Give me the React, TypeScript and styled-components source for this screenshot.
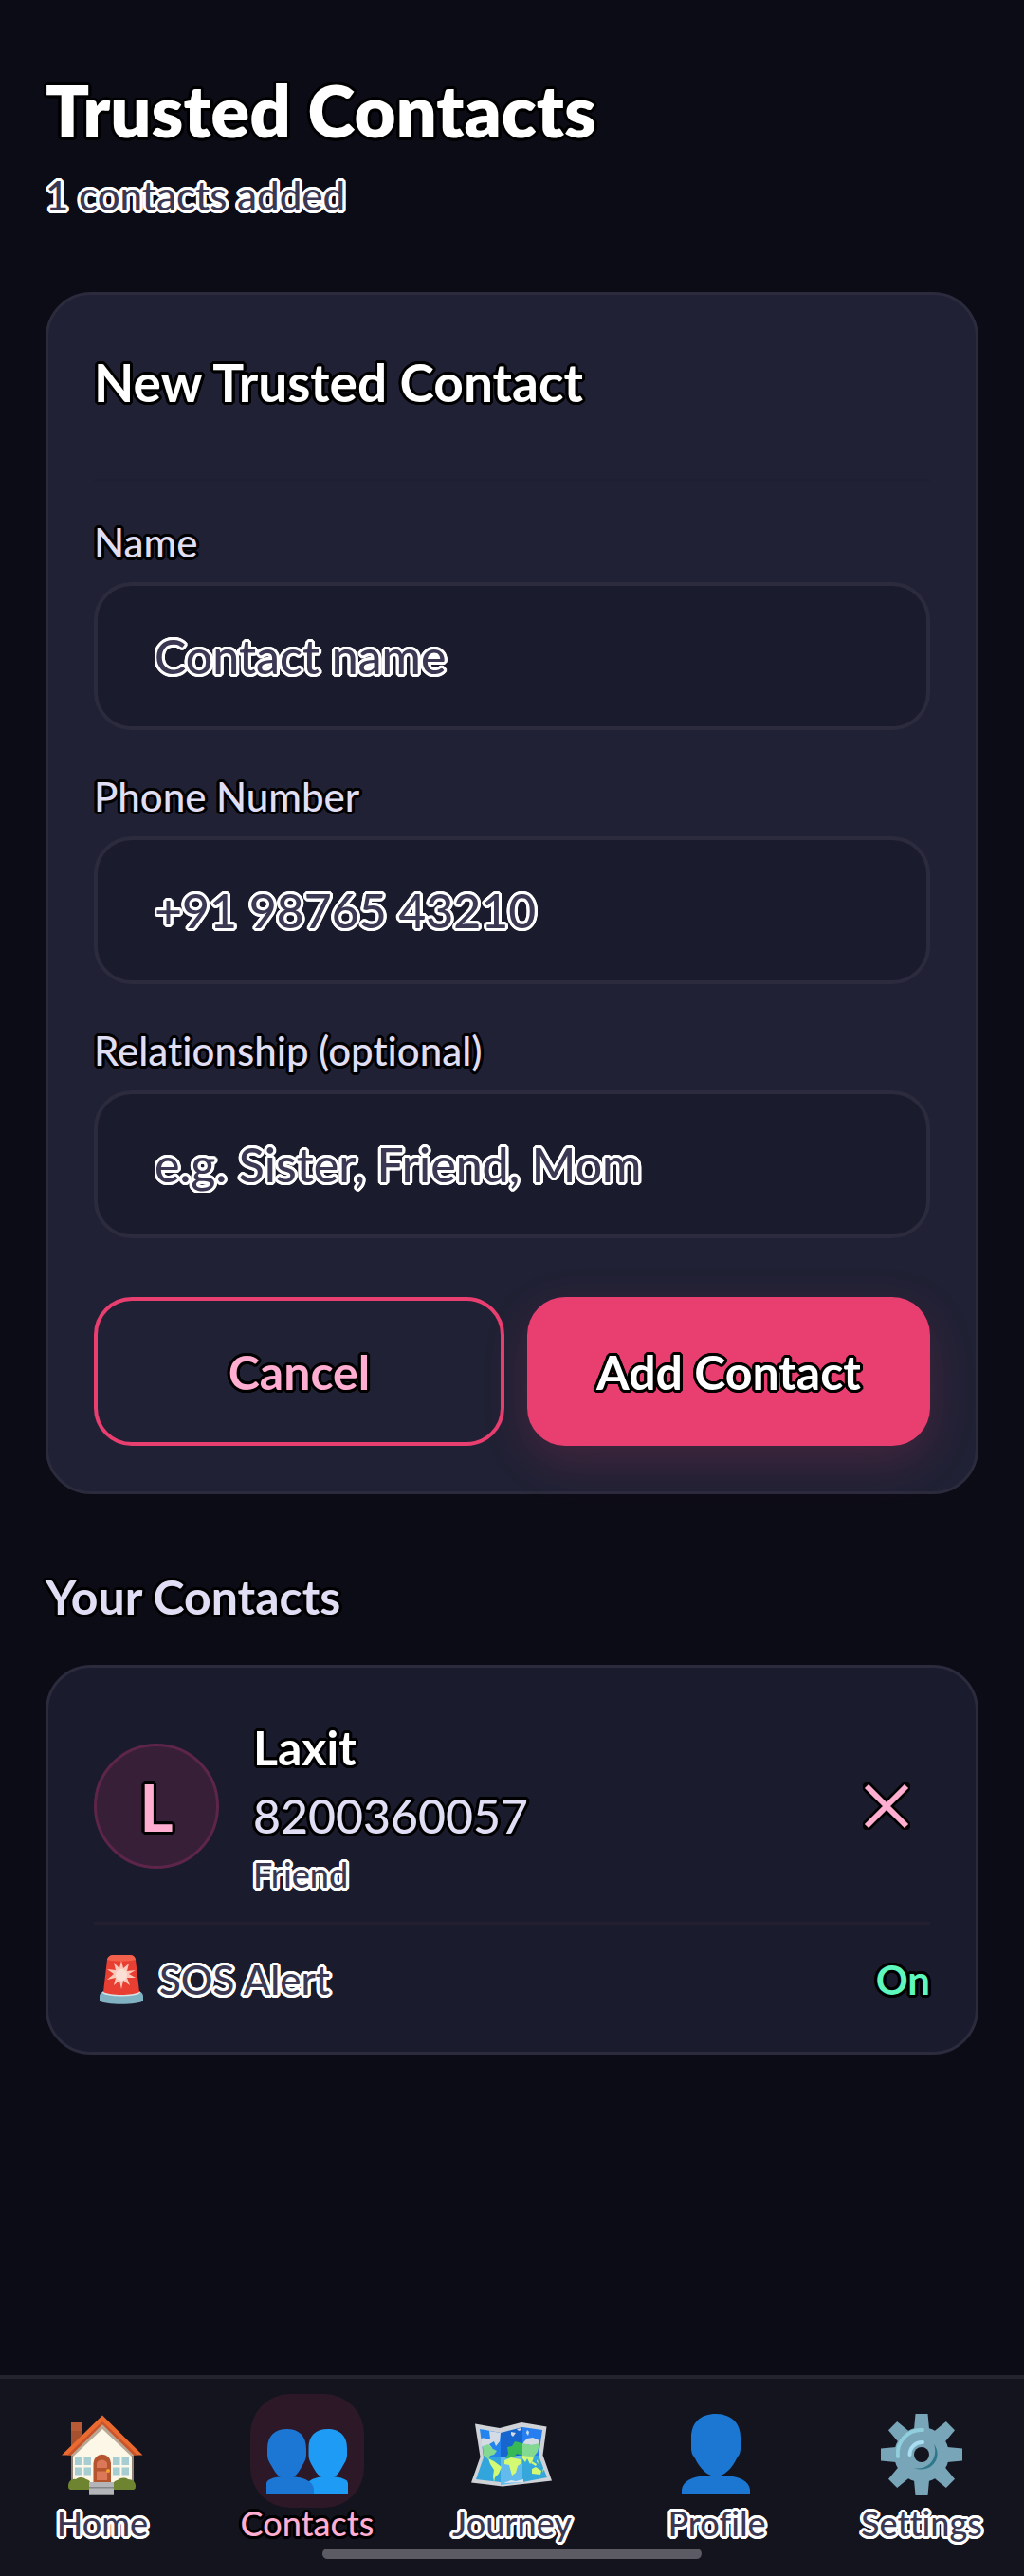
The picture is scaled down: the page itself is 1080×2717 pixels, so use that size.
import React from "react";
import styled, { createGlobalStyle, css } from "styled-components";

const color = {
  page: "#0c0c17",
  panel: "#202134",
  card: "#1a1b2d",
  line: "#2b2b3d",
  faint: "#231f30",
  nav: "#14141f",
  white: "#ffffff",
  soft: "#e0def4",
  muted: "#3a3852",
  pink: "#ffadd0",
  accent: "#e83e70",
  green: "#5ef7bd",
};

const outline = (c: string) => css`
  text-shadow: 3px 0 ${c}, -3px 0 ${c}, 0 3px ${c}, 0 -3px ${c}, 2px 2px ${c},
    -2px 2px ${c}, 2px -2px ${c}, -2px -2px ${c}, 3px 1px ${c}, -3px 1px ${c},
    3px -1px ${c}, -3px -1px ${c}, 1px 3px ${c}, -1px 3px ${c}, 1px -3px ${c},
    -1px -3px ${c};
`;

const GlobalStyle = createGlobalStyle`
  *, *::before, *::after { box-sizing: border-box; }
  body { margin: 0; background: ${color.page}; font-variant-ligatures: none; }
  h1, h2, h3, p { margin: 0; }
  body, button, input { font-family: Lato, "Open Sans", sans-serif; font-weight: 500; }
`;

const Screen = styled.div`
  min-height: 100vh;
  display: flex;
  flex-direction: column;
  background: ${color.page};
  color: ${color.white};
`;

const Content = styled.main`
  flex: 1;
  display: flex;
  flex-direction: column;
  gap: 76px;
  padding: 72px 48px;
`;

const Header = styled.header`
  display: flex;
  flex-direction: column;
  gap: 20px;
`;

const Title = styled.h1`
  font-size: 76px;
  line-height: 88px;
  font-weight: 800;
  ${outline("#000")}
`;

const Subtitle = styled.p`
  font-size: 42px;
  line-height: 52px;
  color: ${color.muted};
  ${outline("#fff")}
`;

const Panel = styled.form`
  padding: 48px;
  border: 3px solid ${color.line};
  border-radius: 48px;
  background: ${color.panel};
`;

const PanelTitle = styled.h2`
  padding-bottom: 58px;
  border-bottom: 3px solid #1e1f32;
  font-size: 55px;
  line-height: 88px;
  font-weight: 700;
  ${outline("#000")}
`;

const Fields = styled.div`
  display: flex;
  flex-direction: column;
  gap: 44px;
  padding: 38px 0 62px;
`;

const Field = styled.div`
  display: flex;
  flex-direction: column;
  gap: 16px;
`;

const Label = styled.label`
  font-size: 42px;
  line-height: 52px;
  color: ${color.soft};
  ${outline("#000")}
`;

const Input = styled.input`
  width: 100%;
  height: 156px;
  padding: 0 60px;
  border: 4px solid ${color.line};
  border-radius: 40px;
  outline: none;
  background: ${color.card};
  color: ${color.white};
  font-size: 50px;
  &::placeholder {
    color: ${color.muted};
    opacity: 1;
    ${outline("#fff")}
  }
`;

const Actions = styled.div`
  display: flex;
  gap: 24px;
`;

const Button = styled.button<{ $primary?: boolean }>`
  flex: 1;
  height: 157px;
  border-radius: 40px;
  font-size: 50px;
  font-weight: 700;
  cursor: pointer;
  ${outline("#000")}
  ${(p) =>
    p.$primary
      ? css`
          border: 0;
          padding: 0;
          background: ${color.accent};
          color: ${color.white};
          box-shadow: 0 16px 48px rgba(232, 62, 112, 0.18);
        `
      : css`
          border: 4px solid ${color.accent};
          padding: 0;
          background: transparent;
          color: ${color.pink};
        `}
`;

const Section = styled.section`
  display: flex;
  flex-direction: column;
  gap: 40px;
`;

const SectionTitle = styled.h2`
  font-size: 50px;
  line-height: 64px;
  font-weight: 700;
  color: ${color.soft};
  ${outline("#000")}
`;

const Card = styled.article`
  padding: 48px;
  border: 3px solid ${color.line};
  border-radius: 48px;
  background: ${color.card};
`;

const Person = styled.div`
  display: flex;
  align-items: center;
  gap: 36px;
  padding-bottom: 24px;
  border-bottom: 3px solid ${color.faint};
`;

const Avatar = styled.div`
  flex: none;
  display: grid;
  place-items: center;
  width: 132px;
  height: 132px;
  border: 3px solid #5d2549;
  border-radius: 50%;
  background: #371f37;
  color: ${color.pink};
  font-size: 68px;
  font-weight: 700;
  ${outline("#000")}
`;

const Details = styled.div`
  flex: 1;
  display: flex;
  flex-direction: column;
  gap: 4px;
`;

const PersonName = styled.h3`
  font-size: 50px;
  line-height: 72px;
  font-weight: 700;
  ${outline("#000")}
`;

const Phone = styled.p`
  font-size: 50px;
  line-height: 64px;
  color: ${color.soft};
  ${outline("#000")}
`;

const Relation = styled.p`
  font-size: 36px;
  line-height: 52px;
  color: ${color.muted};
  ${outline("#fff")}
`;

const RemoveButton = styled.button`
  display: grid;
  place-items: center;
  width: 92px;
  height: 92px;
  padding: 0;
  border: 0;
  background: transparent;
  cursor: pointer;
`;

const AlertRow = styled.div`
  display: flex;
  align-items: center;
  justify-content: space-between;
  padding-top: 30px;
  font-size: 42px;
  line-height: 56px;
`;

const AlertName = styled.span`
  display: flex;
  align-items: center;
  gap: 16px;
  padding-left: 6px;
  color: ${color.muted};
  ${outline("#fff")}
`;

const AlertState = styled.strong`
  font-weight: 700;
  color: ${color.green};
  ${outline("#000")}
`;

const Footer = styled.footer`
  position: sticky;
  bottom: 0;
  display: flex;
  flex-direction: column;
  align-items: center;
  gap: 11px;
  padding: 16px 0 18px;
  border-top: 4px solid #24242f;
  background: ${color.nav};
`;

const Tabs = styled.nav`
  display: grid;
  grid-template-columns: repeat(5, 1fr);
  width: 100%;
`;

const Tab = styled.a<{ $active?: boolean }>`
  display: flex;
  flex-direction: column;
  align-items: center;
  font-size: 36px;
  line-height: 32px;
  text-decoration: none;
  color: ${(p) => (p.$active ? color.pink : color.muted)};
  ${(p) => outline(p.$active ? "#000" : "#fff")}
`;

const TabIcon = styled.span<{ $active?: boolean }>`
  display: flex;
  justify-content: center;
  width: 120px;
  height: 120px;
  padding-top: 21px;
  border-radius: 42px;
  background: ${(p) => (p.$active ? "#2d1828" : "transparent")};
`;

const HomeIndicator = styled.div`
  width: 37%;
  height: 11px;
  border-radius: 6px;
  background: #5c5b64;
`;

const IconFrame = ({ children }: { children: React.ReactNode }) => (
  <svg width="86" height="86" viewBox="0 0 86 86" aria-hidden="true">
    {children}
  </svg>
);

const HomeIcon = () => (
  <IconFrame>
    <path d="M10 9h12v18L10 38z" fill="#a5502f" />
    <path d="M10 9h12v9H10z" fill="#b85a36" />
    <path d="M12 38 43 8l32 30v34H12z" fill="#fdf7e8" />
    <path d="M43 9 10 40v7l33-31 33 31v-7z" fill="#b7a794" />
    <path d="M74 44h2v28h-2z" fill="#8f8273" />
    <path d="M10 44h2v28h-2z" fill="#8f8273" />
    <path d="M43 1.500 85.500 43.500H76L43 11 10 43.500H0z" fill="#ea6a2f" />
    <path d="M43 8 80 43.500h-4L43 11 10 43.500H6z" fill="#c8542c" />
    <g fill="#a5cdd2">
      <path d="M14 46h7.500v8H14zM23.500 46H31v8h-7.500zM14 56.500h7.500v8H14zM23.500 56.500H31v8h-7.500z" />
      <path d="M54 46h7.500v8H54zM63.500 46H71v8h-7.500zM54 56.500h7.500v8H54zM63.500 56.500H71v8h-7.500z" />
    </g>
    <path d="M33.500 72V52a9 9 0 0 1 18.500 0v20z" fill="#b4552f" />
    <path d="M37 57v-5a6 6 0 0 1 11 0v5zM37 60.500h11V70H37z" fill="#dc7757" />
    <circle cx="49" cy="60" r="2" fill="#f2a22c" />
    <path d="M7 76c0-5 4-8 8-7 4-3 8-2 11 0 4 1 5 4 5 7v4H9c-2-1-2-2-2-4zM54 76c0-4 3-6 5-6 3-3 8-3 11-1 5 0 8 3 8 7 0 2 0 3-2 4H54z" fill="#6f8430" />
    <path d="M29 72h26v14H29z" fill="#b4b5b8" />
    <path d="M29 77h26v1.500H29zM29 85h26v1H29z" fill="#858689" />
  </IconFrame>
);

const ContactsIcon = () => (
  <IconFrame>
    <path d="M44 85V72c4-4 10-5 16-6h10c9 1 15 3 16 7v12z" fill="#1d9bf5" />
    <path d="M64.700 16C77 16 85.500 23 85 37v6c0 6-3 9-5 13-4 8-10 13-15.500 13S53 64 49 56c-2-4-4.500-7-4.500-13v-6C44 23 52 16 64.700 16z" fill="#1d9bf5" />
    <path d="M0 85V73c1-4 7-6 16-7h10c14 1 24 5 24 15v4z" fill="#1c76d3" />
    <path d="M21.500 16C34 16 42 23 42 37v6c0 6-3 9-5 13-4 8-10 13-15.500 13S10 64 6 56c-2-4-5-7-5-13v-6C1 23 9 16 21.500 16z" fill="#1c76d3" />
  </IconFrame>
);

const ProfileIcon = () => (
  <IconFrame>
    <path d="M6 85v-5c1-9 11-14 26-15h20c15 1 25 6 26 15v5z" fill="#1b77d2" />
    <path d="M42 0c16 0 26 9 26 25v11c0 6-2 8-4 11-5 11-14 19-22 19s-17-8-22-19c-2-3-4-5-4-11V25C16 9 26 0 42 0z" fill="#1b77d2" />
  </IconFrame>
);

const JourneyIcon = () => (
  <IconFrame>
    <path d="M4 10.500 30 15l23-6 26.500 4.500-4 30L85 70.500 33 76.500 0 72.500l9.500-27z" fill="#cfd3d7" />
    <path d="m9 16 22 4v26H13z" fill="#2384ed" />
    <path d="m31 20 23-6v30l-23 2z" fill="#1765cf" />
    <path d="m54 14 21 3-4 27H54z" fill="#267ef0" />
    <path d="M13 46h18v26L5 69z" fill="#32a5dc" />
    <path d="m31 46 23-2v28l-23 3z" fill="#63bbed" />
    <path d="M54 44h17l9 23-26 5z" fill="#35a7da" />
    <path d="M10 26c5-2 8 2 10 0l-1-8 12 2-1 9-4 5-2-5-5 3 3 4-6 2-5-4zM42 19l5 1-3 4-2-2zM48 16l5-1v2l-3 1zM55 30l4-4 6-1 7 3v4l-8 1-9-1zM59 17l2 2-1 4-2-3z" fill="#d5dbe4" />
    <path d="m12 34 6-2 5 5 4 2-3 4-4 1-2 4-5-4z" fill="#83d991" />
    <path d="m38 35 5-1 3-5 8 2v13l-6-2-3 4-9 1 3-5z" fill="#37b955" />
    <path d="m54 31 9 2 9-2-2 9-4 5-12-1z" fill="#83d991" />
    <path d="m18 47 6 3 8 6-3 7-4 4-1 5-1-6 1-7-4-6zM35 49l7-3 10 2 1 4-4 3-2 7-4 3-3-11-5-1zM54 44l12 1-1 4-3 4-3-6-2 4-3-4zM64 58l4-2 6 4-1 4-9-1z" fill="#d3fa72" />
    <path d="m64 50 5 3-1 2-5-3zM70 48l1 5-2-3zM77 58l-2 4 1-5z" fill="#d3fa72" />
    <path d="m34 73 8-3 5 1 8-2v3z" fill="#dce5ec" />
  </IconFrame>
);

const SettingsIcon = () => (
  <IconFrame>
    <g fill="#78a5b8">
      {[0, 45, 90, 135, 180, 225, 270, 315].map((angle) => (
        <path
          key={angle}
          d="M36.500 0h13L51 16H35z"
          transform={`rotate(${angle} 43 43)`}
        />
      ))}
      <circle cx="43" cy="43" r="29" />
    </g>
    <path d="M18 45a25 25 0 0 1 26-28" fill="none" stroke="#91cedd" strokeWidth="4" strokeLinecap="round" />
    <path d="M30.500 43A13 13 0 0 1 44 30" fill="none" stroke="#a9def2" strokeWidth="4" strokeLinecap="round" />
    <path d="M56 32c10 13-2 32-21 25 15 3 26-10 21-25z" fill="#2f7889" />
    <circle cx="43" cy="43" r="8" fill={color.nav} />
  </IconFrame>
);

const SirenIcon = () => (
  <svg width="47" height="52" viewBox="0 0 47 52" aria-hidden="true">
    <path d="M0 44c0-5 4-8 23-8s23 3 23 8v4c-4 5-42 5-46 0z" fill="#80b2c2" />
    <ellipse cx="23" cy="39.500" rx="20" ry="4" fill="#d6e4e8" />
    <path d="M8 5c1-4 4-5 7-5h16c4 0 6 1 7 5l4 34c-7 4-31 4-38 0z" fill="#e93f32" />
    <path d="M8 5c1-4 4-5 7-5h16c4 0 6 1 7 5-8 2-22 2-30 0z" fill="#f3614c" />
    <path d="m23 6 2 8 6-5-2 8 9-1-7 4 7 4-9 0 3 8-7-5-2 9-2-9-6 5 2-8-9 2 7-6-7-5 9 1-2-8 6 6z" fill="#fbc9bb" />
    <circle cx="23" cy="21" r="6" fill="#fde0d5" />
  </svg>
);

const CrossIcon = () => (
  <svg width="50" height="50" viewBox="0 0 50 50" aria-hidden="true">
    <path d="m5 5 40 40M45 5 5 45" stroke="#000" strokeWidth="11" strokeLinecap="round" />
    <path d="m4 4 42 42M46 4 4 46" stroke={color.pink} strokeWidth="6" />
  </svg>
);

const fields = [
  { id: "name", label: "Name", type: "text", placeholder: "Contact name" },
  { id: "phone", label: "Phone Number", type: "tel", placeholder: "+91 98765 43210" },
  { id: "relation", label: "Relationship (optional)", type: "text", placeholder: "e.g. Sister, Friend, Mom" },
];

const tabs = [
  { label: "Home", Icon: HomeIcon },
  { label: "Contacts", Icon: ContactsIcon, active: true },
  { label: "Journey", Icon: JourneyIcon },
  { label: "Profile", Icon: ProfileIcon },
  { label: "Settings", Icon: SettingsIcon },
];

export default function App() {
  return (
    <Screen>
      <GlobalStyle />
      <Content>
        <Header>
          <Title>Trusted Contacts</Title>
          <Subtitle>1 contacts added</Subtitle>
        </Header>

        <Panel onSubmit={(e) => e.preventDefault()}>
          <PanelTitle>New Trusted Contact</PanelTitle>
          <Fields>
            {fields.map((f) => (
              <Field key={f.id}>
                <Label htmlFor={f.id}>{f.label}</Label>
                <Input id={f.id} type={f.type} placeholder={f.placeholder} />
              </Field>
            ))}
          </Fields>
          <Actions>
            <Button type="button">Cancel</Button>
            <Button type="submit" $primary>
              Add Contact
            </Button>
          </Actions>
        </Panel>

        <Section>
          <SectionTitle>Your Contacts</SectionTitle>
          <Card>
            <Person>
              <Avatar>L</Avatar>
              <Details>
                <PersonName>Laxit</PersonName>
                <Phone>8200360057</Phone>
                <Relation>Friend</Relation>
              </Details>
              <RemoveButton type="button" aria-label="Remove Laxit">
                <CrossIcon />
              </RemoveButton>
            </Person>
            <AlertRow>
              <AlertName>
                <SirenIcon />
                SOS Alert
              </AlertName>
              <AlertState>On</AlertState>
            </AlertRow>
          </Card>
        </Section>
      </Content>

      <Footer>
        <Tabs>
          {tabs.map(({ label, Icon, active }) => (
            <Tab key={label} href={`#${label.toLowerCase()}`} $active={active}>
              <TabIcon $active={active}>
                <Icon />
              </TabIcon>
              {label}
            </Tab>
          ))}
        </Tabs>
        <HomeIndicator />
      </Footer>
    </Screen>
  );
}
